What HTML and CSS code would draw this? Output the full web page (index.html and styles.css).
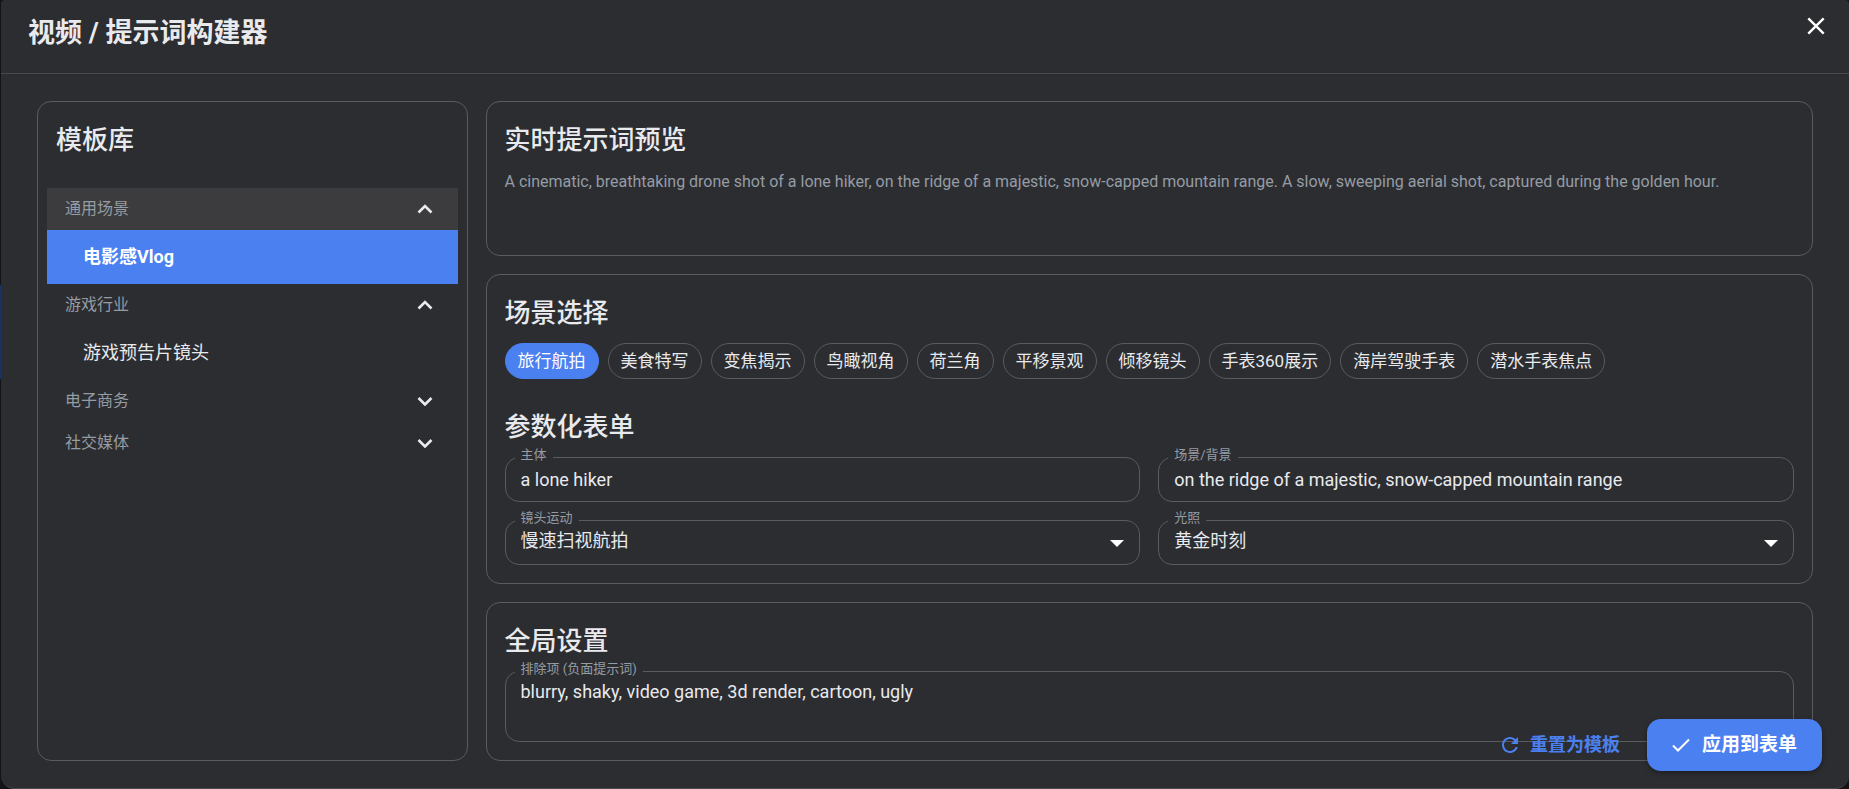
FILE: index.html
```html
<!DOCTYPE html>
<html lang="zh-CN">
<head>
<meta charset="utf-8">
<meta name="viewport" content="width=device-width, initial-scale=1">
<title>视频 / 提示词构建器</title>
<link rel="stylesheet" href="styles.css">
</head>
<body>
<div class="dialog" role="dialog" aria-labelledby="dialog-title">
  <header class="dialog-header">
    <h1 class="dialog-title" id="dialog-title">视频 / 提示词构建器</h1>
    <button class="close-button" type="button" aria-label="关闭">
      <svg class="icon-close" viewBox="0 0 18 18" aria-hidden="true"><path d="M1.3 1.3 16.7 16.7M16.7 1.3 1.3 16.7"/></svg>
    </button>
  </header>

  <main class="dialog-body">
    <aside class="card library">
      <h2 class="card-title library-title">模板库</h2>
      <nav class="library-list">
        <button class="group is-hovered" type="button" aria-expanded="true">通用场景
          <svg class="chevron" viewBox="0 0 16 10" aria-hidden="true"><path d="M1.5 8.5 8 2l6.5 6.5"/></svg>
        </button>
        <button class="template is-selected" type="button">电影感Vlog</button>
        <button class="group" type="button" aria-expanded="true">游戏行业
          <svg class="chevron" viewBox="0 0 16 10" aria-hidden="true"><path d="M1.5 8.5 8 2l6.5 6.5"/></svg>
        </button>
        <button class="template" type="button">游戏预告片镜头</button>
        <button class="group" type="button" aria-expanded="false">电子商务
          <svg class="chevron" viewBox="0 0 16 10" aria-hidden="true"><path d="M1.5 2 8 8.5 14.5 2"/></svg>
        </button>
        <button class="group" type="button" aria-expanded="false">社交媒体
          <svg class="chevron" viewBox="0 0 16 10" aria-hidden="true"><path d="M1.5 2 8 8.5 14.5 2"/></svg>
        </button>
      </nav>
    </aside>

    <div class="builder">
      <section class="card preview">
        <h2 class="card-title">实时提示词预览</h2>
        <p class="preview-text">A cinematic, breathtaking drone shot of a lone hiker, on the ridge of a majestic, snow-capped mountain range. A slow, sweeping aerial shot, captured during the golden hour.</p>
      </section>

      <section class="card">
        <h2 class="card-title">场景选择</h2>
        <div class="chips">
          <button class="chip is-active" type="button">旅行航拍</button>
          <button class="chip" type="button">美食特写</button>
          <button class="chip" type="button">变焦揭示</button>
          <button class="chip" type="button">鸟瞰视角</button>
          <button class="chip" type="button">荷兰角</button>
          <button class="chip" type="button">平移景观</button>
          <button class="chip" type="button">倾移镜头</button>
          <button class="chip" type="button">手表360展示</button>
          <button class="chip" type="button">海岸驾驶手表</button>
          <button class="chip" type="button">潜水手表焦点</button>
        </div>
        <h2 class="card-title">参数化表单</h2>
        <div class="fields">
          <div class="field">
            <label class="field-label" for="subject">主体</label>
            <input class="control" id="subject" type="text" value="a lone hiker">
          </div>
          <div class="field">
            <label class="field-label" for="scene">场景/背景</label>
            <input class="control" id="scene" type="text" value="on the ridge of a majestic, snow-capped mountain range">
          </div>
          <div class="field">
            <label class="field-label" for="camera">镜头运动</label>
            <select class="control select" id="camera"><option>慢速扫视航拍</option></select>
            <svg class="caret" viewBox="0 0 14 7" aria-hidden="true"><path d="M0 0h14L7 7z"/></svg>
          </div>
          <div class="field">
            <label class="field-label" for="lighting">光照</label>
            <select class="control select" id="lighting"><option>黄金时刻</option></select>
            <svg class="caret" viewBox="0 0 14 7" aria-hidden="true"><path d="M0 0h14L7 7z"/></svg>
          </div>
        </div>
      </section>

      <section class="card">
        <h2 class="card-title">全局设置</h2>
        <div class="field">
          <label class="field-label" for="negative">排除项 (负面提示词)</label>
          <textarea class="control textarea" id="negative">blurry, shaky, video game, 3d render, cartoon, ugly</textarea>
        </div>
      </section>
    </div>
  </main>

  <footer class="actions">
    <button class="reset-button" type="button">
      <svg class="icon-reset" viewBox="4 4 16 16" aria-hidden="true"><path d="M17.65 6.35C16.2 4.9 14.21 4 12 4c-4.42 0-7.99 3.58-7.99 8s3.57 8 7.99 8c3.73 0 6.84-2.55 7.73-6h-2.08c-.82 2.33-3.04 4-5.65 4-3.31 0-6-2.69-6-6s2.69-6 6-6c1.66 0 3.14.69 4.22 1.78L13 11h7V4z"/></svg>
      重置为模板
    </button>
    <button class="apply-button" type="button">
      <svg class="icon-check" viewBox="0 0 18 14" aria-hidden="true"><path d="M1 7.5 6 12.5 17 1.5"/></svg>
      应用到表单
    </button>
  </footer>
</div>
</body>
</html>
```
FILE: styles.css
```css
:root {
  --surface: #2c2d31;
  --line: #5a5b5f;
  --text: #e8eaed;
  --muted: #959ca4;
  --accent: #4b80f0;
}

* {
  box-sizing: border-box;
}

body {
  margin: 0;
  padding-left: 1px;
  min-height: 100vh;
  display: flex;
  background: linear-gradient(#131416 285px, #1b3163 285px 379px, #131416 379px);
  color: var(--text);
  font: 18px/26px Roboto, "Noto Sans CJK SC", sans-serif;
}

button,
input,
select,
textarea {
  margin: 0;
  border: 0;
  background: none;
  color: inherit;
  font: inherit;
}

button {
  cursor: pointer;
}

.dialog {
  position: relative;
  flex: 1;
  min-width: 0;
  display: flex;
  flex-direction: column;
  background: var(--surface);
  border-bottom: 1px solid #48494c;
  border-radius: 4px 4px 14px 14px;
}

.dialog-header {
  display: flex;
  justify-content: space-between;
  align-items: flex-start;
  height: 74px;
  padding: 13px 24px 0 27px;
  border-bottom: 1px solid #48494c;
}

.dialog-title {
  margin: 0;
  font-size: 27px;
  line-height: 40px;
  font-weight: 700;
}

.close-button {
  display: flex;
  margin-top: 4px;
  padding: 0;
}

.icon-close {
  width: 18px;
  height: 18px;
  fill: none;
  stroke: #fff;
  stroke-width: 2.4;
}

.dialog-body {
  flex: 1;
  display: grid;
  grid-template-columns: minmax(0, 24fr) minmax(0, 74fr);
  gap: 18px;
  padding: 27px 36px;
}

.card {
  border: 1px solid var(--line);
  border-radius: 14px;
  padding: 18px;
}

.card-title {
  margin: 0 0 9px;
  font-size: 26px;
  line-height: 41px;
  font-weight: 500;
}

.library {
  padding: 18px 9px;
}

.library-title {
  margin: 0 9px 27px;
}

.library-list {
  display: flex;
  flex-direction: column;
}

.group {
  display: flex;
  align-items: center;
  justify-content: space-between;
  height: 42px;
  padding: 0 25px 0 18px;
  color: var(--muted);
  font-size: 16px;
}

.group.is-hovered {
  background: #3c3c3e;
}

.chevron {
  width: 16px;
  height: 10px;
  fill: none;
  stroke: var(--text);
  stroke-width: 2.6;
}

.template {
  height: 54px;
  padding: 0 36px;
  text-align: left;
}

.template.is-selected {
  background: var(--accent);
  color: #fff;
  font-weight: 700;
}

.builder {
  display: flex;
  flex-direction: column;
  gap: 18px;
}

.preview {
  min-height: 155px;
}

.preview-text {
  margin: 0;
  color: var(--muted);
  font-size: 16px;
  line-height: 24px;
}

.chips {
  display: flex;
  flex-wrap: wrap;
  gap: 9px;
  margin-bottom: 28px;
}

.chip {
  height: 36px;
  padding: 0 12px;
  border: 1px solid var(--line);
  border-radius: 18px;
  font-size: 17px;
  line-height: 24px;
}

.chip.is-active {
  border-color: var(--accent);
  background: var(--accent);
  color: #fff;
}

.fields {
  display: grid;
  grid-template-columns: repeat(2, minmax(0, 1fr));
  gap: 18px;
}

.field {
  position: relative;
  display: flex;
}

.field-label {
  position: absolute;
  top: -12px;
  left: 10px;
  padding: 0 6px;
  background: var(--surface);
  color: var(--muted);
  font-size: 13px;
  line-height: 20px;
}

.control {
  width: 100%;
  height: 45px;
  padding: 0 15px 1px;
  border: 1px solid var(--line);
  border-radius: 14px;
  outline: 0;
}

.select {
  appearance: none;
  padding-bottom: 3px;
}

.caret {
  position: absolute;
  top: 20px;
  right: 16px;
  width: 14px;
  height: 7px;
  fill: #fff;
  pointer-events: none;
}

.textarea {
  height: 71px;
  padding-top: 7px;
  resize: none;
}

.actions {
  position: absolute;
  right: 27px;
  bottom: 17px;
  display: flex;
  align-items: center;
  gap: 9px;
}

.reset-button,
.apply-button {
  display: flex;
  align-items: center;
  font-weight: 700;
}

.reset-button {
  gap: 12px;
  padding: 9px 18px;
  color: var(--accent);
}

.icon-reset {
  width: 16px;
  height: 16px;
  fill: currentColor;
}

.apply-button {
  gap: 12px;
  height: 52px;
  padding: 0 25px;
  border-radius: 14px;
  background: var(--accent);
  box-shadow: 0 2px 5px rgba(0, 0, 0, 0.35);
  color: #fff;
  font-size: 19px;
}

.icon-check {
  width: 18px;
  height: 14px;
  fill: none;
  stroke: currentColor;
  stroke-width: 2;
}
```
